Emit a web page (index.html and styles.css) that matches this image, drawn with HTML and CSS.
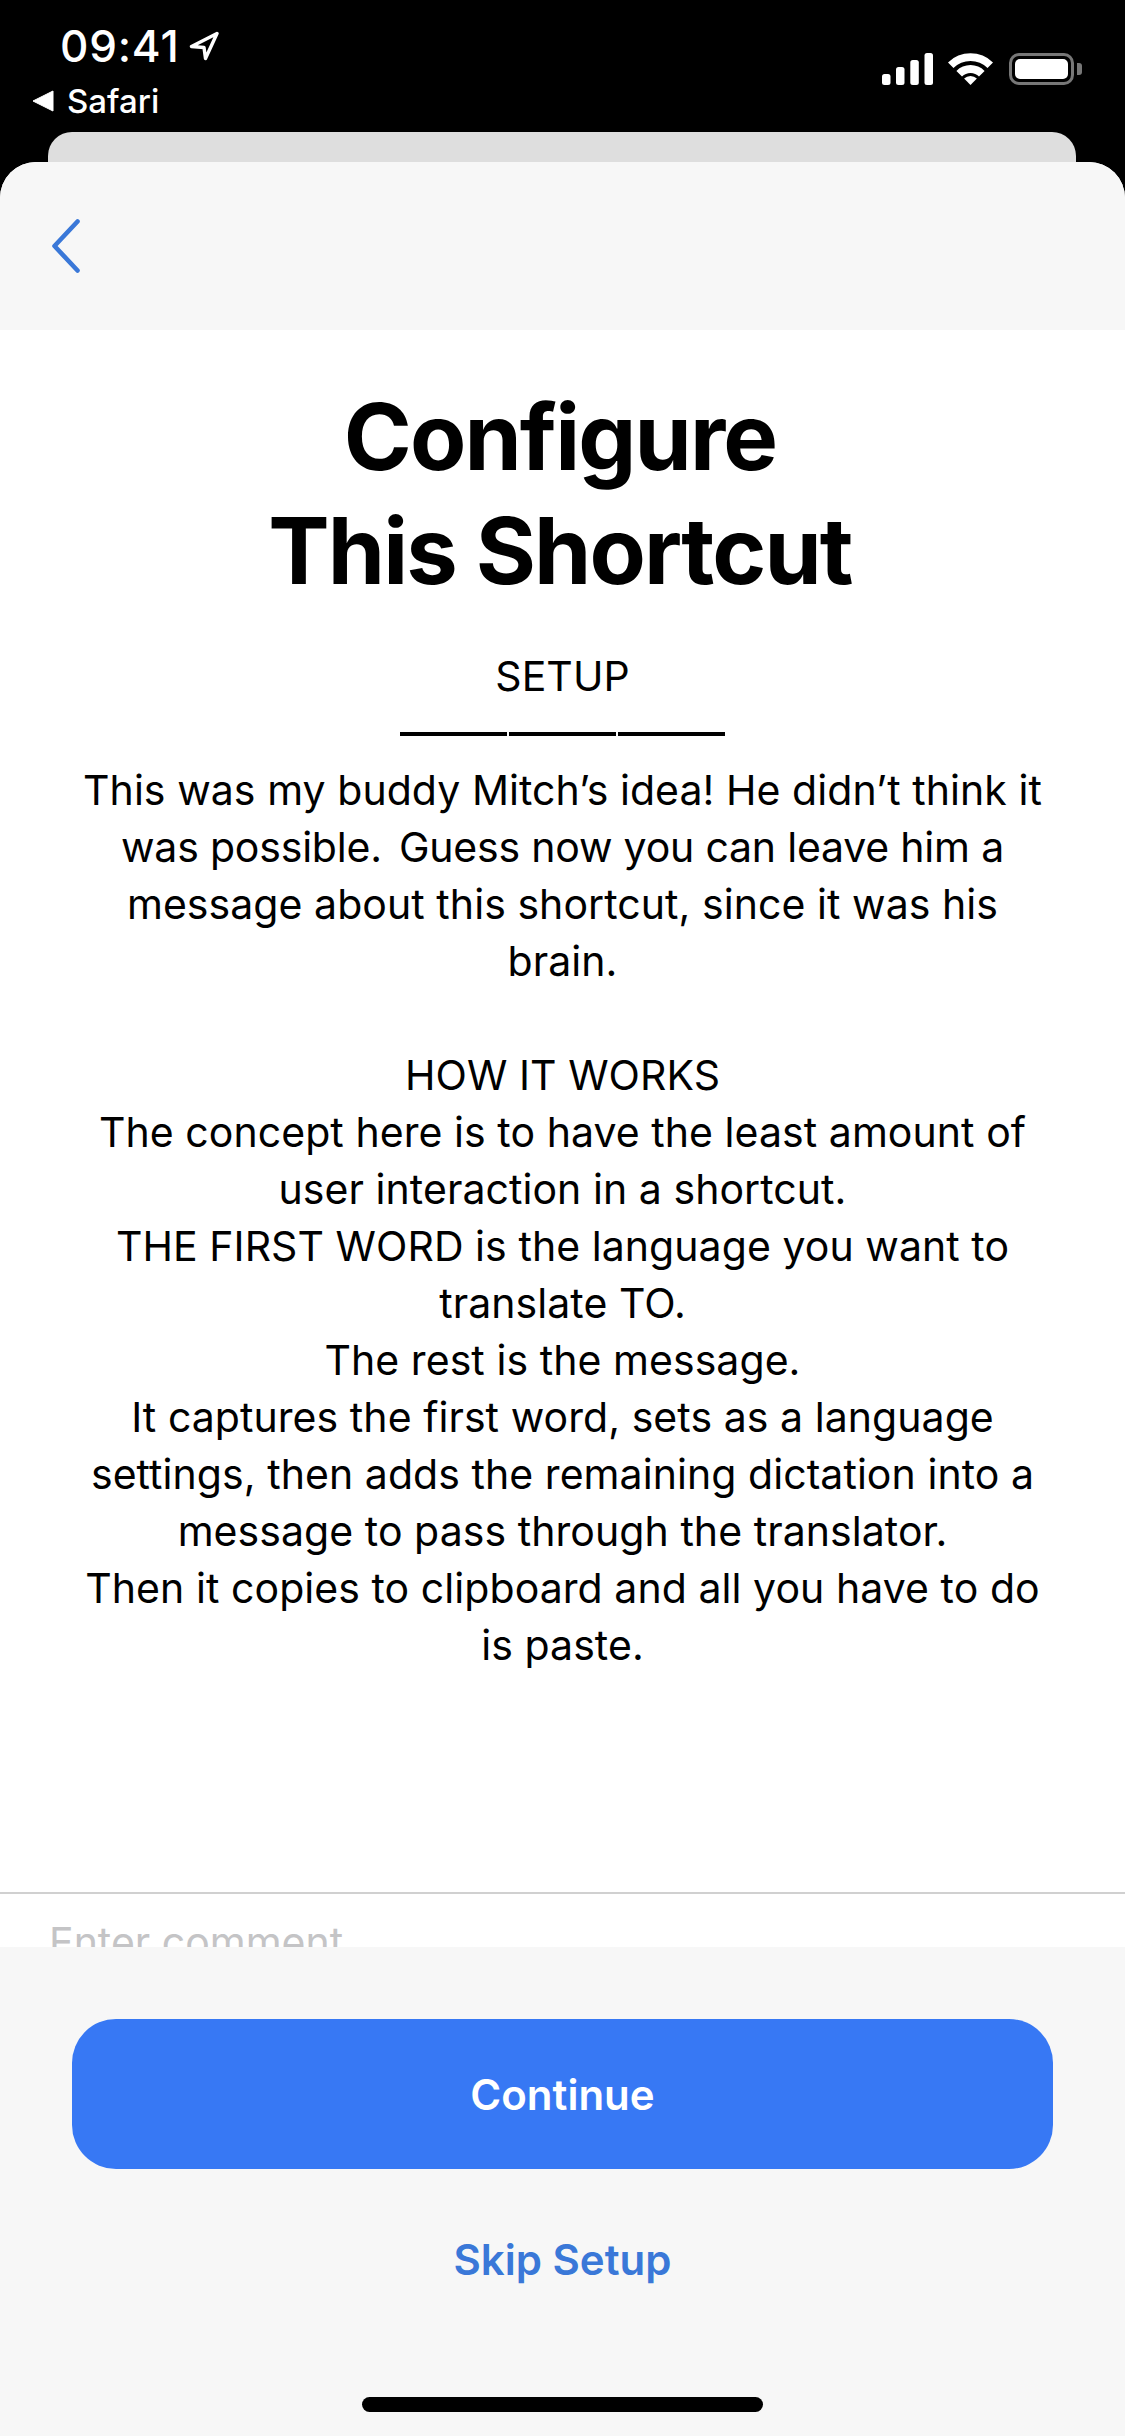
FILE: index.html
```html
<!DOCTYPE html>
<html lang="en">
<head>
	<meta charset="UTF-8">
	<meta name="viewport" content="width=device-width, initial-scale=1.0">
	<title>Configure This Shortcut</title>
	<link rel="stylesheet" href="styles.css">
</head>
<body>
	<div class="status-bar">
		<div class="status-left">
			<div class="time-row">
				<span class="time">09:41</span>
				<svg class="location" viewBox="0 0 30 30"><path d="M28 2.5 L2.5 15.5 L15 16.5 L16.5 27.5 Z" fill="none" stroke="#fff" stroke-width="3.4" stroke-linejoin="round"/></svg>
			</div>
			<div class="back-app">
				<svg class="back-arrow" viewBox="0 0 22 22"><path d="M21 1 V21 L1 11 Z" fill="#fff" stroke="#fff" stroke-width="1" stroke-linejoin="round"/></svg>
				<span>Safari</span>
			</div>
		</div>
		<div class="status-right">
			<svg class="signal" viewBox="0 0 51 32"><rect x="0" y="21" width="8.5" height="11" rx="2.5" fill="#fff"/><rect x="14" y="14" width="8.5" height="18" rx="2.5" fill="#fff"/><rect x="28.3" y="7" width="8.5" height="25" rx="2.5" fill="#fff"/><rect x="42.5" y="0" width="8.5" height="32" rx="2.5" fill="#fff"/></svg>
			<svg class="wifi" viewBox="0 0 45 33"><path d="M0 10.4 A32 32 0 0 1 45 10.4 L39.5 16 A24 24 0 0 0 5.5 16 Z" fill="#fff"/><path d="M8.4 18.9 A20 20 0 0 1 36.6 18.9 L31 24.5 A12 12 0 0 0 14 24.5 Z" fill="#fff"/><path d="M16.1 26.6 A9 9 0 0 1 28.9 26.6 L22.5 33 Z" fill="#fff"/></svg>
			<div class="battery">
				<div class="battery-body"><div class="battery-level"></div></div>
				<div class="battery-cap"></div>
			</div>
		</div>
	</div>
	<div class="peek-card"></div>
	<div class="sheet">
		<div class="sheet-header">
			<svg class="chevron" viewBox="0 0 36 60"><path d="M28.5 3.5 L5.5 28 L28.5 52.5" fill="none" stroke="#3a78d8" stroke-width="4.6" stroke-linecap="round" stroke-linejoin="round"/></svg>
		</div>
		<div class="content">
			<h1>Configure<br>This Shortcut</h1>
			<div class="description">
				<p>SETUP</p>
				<div class="dashes"><span></span><span></span><span></span></div>
				<p>This was my buddy Mitch’s idea! He didn’t think it<br><span class="narrow">was possible.<span class="tight">&nbsp; </span>Guess now you can leave him a</span><br>message about this shortcut, since it was his<br>brain.</p>
				<p class="blank">&nbsp;</p>
				<p>HOW IT WORKS<br>The concept here is to have the least amount of<br>user interaction in a shortcut.<br>THE FIRST WORD is the language you want to<br>translate TO.<br>The rest is the message.<br>It captures the first word, sets as a language<br>settings, then adds the remaining dictation into a<br>message to pass through the translator.<br>Then it copies to clipboard and all you have to do<br>is paste.</p>
			</div>
		</div>
		<div class="comment-box">
			<div class="comment-text">Enter comment</div>
		</div>
		<div class="footer">
			<button class="continue">Continue</button>
			<button class="skip">Skip Setup</button>
			<div class="home-indicator"></div>
		</div>
	</div>
</body>
</html>
```

FILE: styles.css
```css
* {
  box-sizing: border-box;
}
html, body {
  margin: 0;
  height: 100%;
}
body {
  width: 1125px;
  height: 2436px;
  display: flex;
  flex-direction: column;
  align-items: stretch;
  background-color: black;
  font-family: Inter, "Liberation Sans", sans-serif;
  overflow: hidden;
}
.status-bar {
  height: 132px;
  display: flex;
  justify-content: space-between;
  color: white;
}
.status-left {
  padding: 23px 0 0 32px;
}
.time-row {
  display: flex;
  align-items: center;
  padding-left: 28px;
  height: 46px;
}
.time {
  font-size: 44px;
  font-weight: 500;
  line-height: 46px;
  letter-spacing: 0.8px;
}
.location {
  width: 30px;
  height: 30px;
  margin: -1px 0 0 10px;
}
.back-app {
  display: flex;
  align-items: center;
  gap: 13px;
  margin-top: 13px;
  font-size: 33px;
  font-weight: 500;
  line-height: 38px;
}
.back-arrow {
  width: 22px;
  height: 22px;
}
.status-right {
  display: flex;
  align-items: center;
  gap: 15px;
  height: 33px;
  margin: 52px 43px 0 0;
}
.signal {
  width: 51px;
  height: 32px;
}
.wifi {
  width: 45px;
  height: 33px;
}
.battery {
  display: flex;
  align-items: center;
  margin-left: 1px;
}
.battery-body {
  width: 65px;
  height: 32px;
  border: 3px solid #777;
  border-radius: 10px;
  padding: 3px;
}
.battery-level {
  height: 100%;
  background-color: white;
  border-radius: 5px;
}
.battery-cap {
  width: 5px;
  height: 12px;
  margin-left: 3px;
  background-color: #777;
  border-radius: 0 3px 3px 0;
}
.peek-card {
  height: 30px;
  margin: 0 49px 0 48px;
  background-color: #dedede;
  border-radius: 24px 24px 0 0;
}
.sheet {
  flex: 1;
  display: flex;
  flex-direction: column;
  background-color: white;
  border-radius: 36px 36px 0 0;
  overflow: hidden;
}
.sheet-header {
  height: 168px;
  background-color: #f7f7f7;
  padding: 56px 0 0 49px;
}
.chevron {
  display: block;
  width: 36px;
  height: 60px;
}
.content {
  flex: 1;
  text-align: center;
  color: black;
}
h1 {
  margin: 50px 0 0;
  padding-right: 5px;
  font-size: 92px;
  font-weight: 700;
  line-height: 114px;
  letter-spacing: -1.9px;
}
.description {
  margin-top: 40px;
  font-size: 41px;
  line-height: 57px;
  letter-spacing: 0.06px;
}
.description p {
  margin: 0;
}
.narrow {
  letter-spacing: -0.2px;
}
.tight {
  letter-spacing: -3px;
}
.dashes {
  display: flex;
  justify-content: center;
  align-items: center;
  gap: 2px;
  height: 57px;
}
.dashes span {
  width: 107px;
  height: 4px;
  background-color: black;
}
.comment-box {
  height: 55px;
  border-top: 2px solid #d0d0d0;
  padding: 25px 0 0 49px;
  overflow: hidden;
}
.comment-text {
  font-size: 41px;
  line-height: 46px;
  color: #c4c4c6;
}
.footer {
  height: 489px;
  background-color: #f7f7f7;
  display: flex;
  flex-direction: column;
  align-items: center;
  padding-top: 72px;
}
button {
  border: none;
  font-family: inherit;
  font-size: 42px;
  font-weight: 600;
}
.continue {
  width: 981px;
  height: 150px;
  background-color: #3778f4;
  color: white;
  border-radius: 44px;
}
.skip {
  height: 60px;
  margin-top: 60px;
  padding: 0;
  background: none;
  color: #3a78d8;
}
.home-indicator {
  width: 401px;
  height: 15px;
  margin-top: 108px;
  background-color: black;
  border-radius: 8px;
}
```
